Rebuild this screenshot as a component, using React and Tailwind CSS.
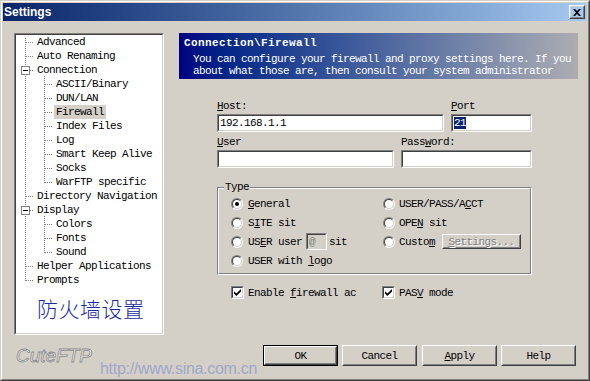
import React from "react";

const mono = "font-['Liberation_Mono',monospace] text-[11px] tracking-[-0.6px] leading-[12px]";

function Sunken({ className = "", innerClass = "bg-white", children }) {
  return (
    <div className={"border border-t-[#808080] border-l-[#808080] border-r-white border-b-white " + className}>
      <div className={"h-full w-full border border-t-[#404040] border-l-[#404040] border-r-[#d4d0c8] border-b-[#d4d0c8] flex items-center overflow-hidden " + innerClass}>
        {children}
      </div>
    </div>
  );
}

function Raised({ className = "", children }) {
  return (
    <div className={"border border-t-white border-l-white border-r-[#404040] border-b-[#404040] " + className}>
      <div className="h-full w-full border border-t-[#d4d0c8] border-l-[#d4d0c8] border-r-[#808080] border-b-[#808080] flex items-center justify-center">
        {children}
      </div>
    </div>
  );
}

function Radio({ checked }) {
  return (
    <span className="block w-[12px] h-[12px] shrink-0 rounded-full border border-t-[#808080] border-l-[#808080] border-r-white border-b-white">
      <span className="w-full h-full rounded-full border border-t-[#404040] border-l-[#404040] border-r-[#d4d0c8] border-b-[#d4d0c8] bg-white flex items-center justify-center">
        {checked && <span className="block w-[4px] h-[4px] rounded-full bg-black" />}
      </span>
    </span>
  );
}

function Check() {
  return (
    <Sunken className="w-[13px] h-[13px] shrink-0" innerClass="bg-white justify-center">
      <svg width="7" height="7" viewBox="0 0 7 7">
        <path d="M0 2.2 L2.4 4.6 L7 0 L7 2.4 L2.4 7 L0 4.6 Z" fill="#000" />
      </svg>
    </Sunken>
  );
}

const items = [
  { t: "Advanced", l: 0 },
  { t: "Auto Renaming", l: 0 },
  { t: "Connection", l: 0, box: true },
  { t: "ASCII/Binary", l: 1 },
  { t: "DUN/LAN", l: 1 },
  { t: "Firewall", l: 1, sel: true },
  { t: "Index Files", l: 1 },
  { t: "Log", l: 1 },
  { t: "Smart Keep Alive", l: 1 },
  { t: "Socks", l: 1 },
  { t: "WarFTP specific", l: 1 },
  { t: "Directory Navigation", l: 0 },
  { t: "Display", l: 0, box: true },
  { t: "Colors", l: 1 },
  { t: "Fonts", l: 1 },
  { t: "Sound", l: 1 },
  { t: "Helper Applications", l: 0 },
  { t: "Prompts", l: 0 },
];

function TreeLines() {
  const g = "#808080";
  const els = [];
  els.push(<line key="rv" x1="9.5" y1="3" x2="9.5" y2="246" stroke={g} strokeDasharray="1 1" />);
  els.push(<line key="cv1" x1="28.5" y1="41" x2="28.5" y2="148" stroke={g} strokeDasharray="1 1" />);
  els.push(<line key="cv2" x1="28.5" y1="181" x2="28.5" y2="218" stroke={g} strokeDasharray="1 1" />);
  items.forEach((it, i) => {
    const c = 7 + 14 * i + 0.5;
    if (it.l === 0) {
      els.push(<line key={"h" + i} x1={it.box ? 14 : 10} y1={c} x2="18" y2={c} stroke={g} strokeDasharray="1 1" />);
    } else {
      els.push(<line key={"h" + i} x1="29" y1={c} x2="37" y2={c} stroke={g} strokeDasharray="1 1" />);
    }
  });
  items.forEach((it, i) => {
    if (!it.box) return;
    const c = 7 + 14 * i;
    els.push(<rect key={"b" + i} x="5.5" y={c - 3.5} width="8" height="8" fill="#fff" stroke={g} />);
    els.push(<line key={"m" + i} x1="7" y1={c + 0.5} x2="12" y2={c + 0.5} stroke="#000" />);
  });
  return (
    <svg className="absolute left-0 top-0 pointer-events-none" width="146" height="260">
      {els}
    </svg>
  );
}

function Tree() {
  return (
    <div className="w-[150px] h-[302px] shrink-0 border border-t-[#808080] border-l-[#808080] border-r-white border-b-white">
      <div className="w-full h-full bg-white border border-t-[#404040] border-l-[#404040] border-r-[#d4d0c8] border-b-[#d4d0c8] overflow-hidden">
        <div className="relative">
          <TreeLines />
          {items.map((it) => (
            <div key={it.t} className={"h-[14px] flex items-center whitespace-nowrap text-black " + mono + (it.l === 0 ? " pl-[21px]" : " pl-[38px]")}>
              <span className={"px-[2px] h-[14px] flex items-center " + (it.l === 0 ? "-ml-[2px] " : "") + (it.sel ? "bg-[#d4d0c8]" : "")}>{it.t}</span>
            </div>
          ))}
          <div className="mt-[11px] pl-[21px] font-['Noto_Sans_CJK_SC',sans-serif] font-light text-[21px] leading-[21px] tracking-[0.5px] text-[#1c2c9c] whitespace-nowrap">
            防火墙设置
          </div>
        </div>
      </div>
    </div>
  );
}

function Banner() {
  return (
    <div className={"h-[46px] bg-linear-to-r from-[#000080] to-[#adadb2] pt-[4px] pl-[5px] text-white whitespace-pre " + mono}>
      <div className="font-bold tracking-[0.4px]">{"Connection\\Firewall"}</div>
      <div className="mt-[4px] pl-[9px]">You can configure your firewall and proxy settings here. If you</div>
      <div className="pl-[9px]">about what those are, then consult your system administrator</div>
    </div>
  );
}

function Label({ children }) {
  return <div className={"h-[12px] text-black whitespace-nowrap " + mono}>{children}</div>;
}

function Form() {
  return (
    <div className={"ml-[38px] w-[315px] text-black " + mono}>
      <div className="flex mt-[21px]">
        <div className="w-[227px]">
          <Label><u>H</u>ost:</Label>
          <Sunken className="mt-[2px] h-[18px]">
            <span className="pl-[1px]">192.168.1.1</span>
          </Sunken>
        </div>
        <div className="ml-[7px] w-[81px]">
          <Label><u>P</u>ort</Label>
          <Sunken className="mt-[2px] h-[18px]">
            <span className="ml-[1px] bg-[#0a246a] text-white">21</span>
          </Sunken>
        </div>
      </div>
      <div className="flex mt-[4px]">
        <div className="w-[177px]">
          <Label><u>U</u>ser</Label>
          <Sunken className="mt-[2px] h-[18px]" />
        </div>
        <div className="ml-[7px] w-[131px]">
          <Label>Pass<u>w</u>ord:</Label>
          <Sunken className="mt-[2px] h-[18px]" />
        </div>
      </div>

      <div className="relative mt-[19px] h-[88px] border border-t-[#808080] border-l-[#808080] border-r-white border-b-white">
        <div className="h-full border border-t-white border-l-white border-r-[#808080] border-b-[#808080] pt-[5px] pl-[12px]">
          <div className="grid grid-cols-[152px_1fr] auto-rows-[19px]">
            <div className="flex items-center gap-[5px]"><Radio checked /><span><u>G</u>eneral</span></div>
            <div className="flex items-center gap-[4px]"><Radio /><span>USER/PASS/A<u>C</u>CT</span></div>

            <div className="flex items-center gap-[5px]"><Radio /><span className="whitespace-nowrap">S<u>I</u>TE sit</span></div>
            <div className="flex items-center gap-[4px]"><Radio /><span className="whitespace-nowrap">OPE<u>N</u> sit</span></div>

            <div className="flex items-center gap-[5px]">
              <Radio />
              <span className="whitespace-nowrap">US<u>E</u>R user</span>
              <Sunken className="w-[21px] h-[17px] -ml-[1px]" innerClass="bg-[#d4d0c8]">
                <span className="pl-[1px] text-[#808080]">@</span>
              </Sunken>
              <span className="-ml-[3px]">sit</span>
            </div>
            <div className="flex items-center gap-[4px]">
              <Radio />
              <span className="whitespace-nowrap">Custo<u>m</u></span>
              <Raised className="ml-[3px] w-[79px] h-[15px]">
                <span className="text-[#808080] [text-shadow:1px_1px_0_#fff] whitespace-nowrap"><u>S</u>ettings...</span>
              </Raised>
            </div>

            <div className="flex items-center gap-[5px]"><Radio /><span className="whitespace-nowrap">USER with <u>l</u>ogo</span></div>
            <div />
          </div>
        </div>
        <div className={"absolute left-[6px] -top-[7px] px-[1px] bg-[#d4d0c8] " + mono}>Type</div>
      </div>

      <div className="mt-[11px] ml-[14px] flex items-center h-[13px]">
        <div className="w-[151px] flex items-center gap-[4px]">
          <Check />
          <span className="whitespace-nowrap">Enable <u>f</u>irewall ac</span>
        </div>
        <div className="flex items-center gap-[4px]">
          <Check />
          <span className="whitespace-nowrap">PAS<u>V</u> mode</span>
        </div>
      </div>
    </div>
  );
}

function Btn({ children, def, className = "" }) {
  const inner = (
    <Raised className={def ? "w-full h-full" : "w-[75px] h-[21px]"}>
      <span className={"text-black " + mono}>{children}</span>
    </Raised>
  );
  if (def) {
    return <div className={"w-[75px] h-[21px] border border-black " + className}>{inner}</div>;
  }
  return <div className={className}>{inner}</div>;
}

export default function App() {
  return (
    <div className="w-[590px] h-[381px] bg-[#d4d0c8] border border-t-[#d4d0c8] border-l-[#d4d0c8] border-r-[#404040] border-b-[#404040] overflow-hidden">
      <div className="h-full border border-t-white border-l-white border-r-[#808080] border-b-[#808080] p-px flex flex-col">
        <div className="h-[18px] shrink-0 flex items-center bg-linear-to-r from-[#0a246a] to-[#a6caf0] pl-px pr-[2px]">
          <span className="font-['Liberation_Sans',sans-serif] font-bold text-[12px] leading-none text-white">Settings</span>
          <Raised className="ml-auto w-[16px] h-[14px]">
            <svg width="8" height="7" viewBox="0 0 8 7">
              <path d="M0 0 H2 L4 2 L6 0 H8 L5 3.5 L8 7 H6 L4 5 L2 7 H0 L3 3.5 Z" fill="#000" />
            </svg>
          </Raised>
        </div>

        <div className="flex-1 flex flex-col">
          <div className="flex">
            <div className="ml-[11px] mt-[12px]">
              <Tree />
            </div>
            <div className="ml-[15px] mt-[12px] w-[399px]">
              <Banner />
              <Form />
            </div>
          </div>

          <div className="flex items-start">
            <div className="ml-[13px] w-[84px] mt-[11px] font-['Liberation_Sans',sans-serif] italic text-[19px] leading-[19px] text-[#f3f2ef] [-webkit-text-stroke:0.8px_#8a8a8a] whitespace-nowrap">
              CuteFTP
            </div>
            <div className="w-[163px] mt-[26px] font-['Liberation_Sans',sans-serif] text-[16px] leading-[16px] tracking-[-0.3px] text-[#a0a7c8] whitespace-nowrap">
              http://www.sina.com.cn
            </div>
            <div className="flex mt-[10px]">
              <Btn def>OK</Btn>
              <Btn className="ml-[4px]">Cancel</Btn>
              <Btn className="ml-[5px]"><u>A</u>pply</Btn>
              <Btn className="ml-[4px]">Help</Btn>
            </div>
          </div>
        </div>
      </div>
    </div>
  );
}
